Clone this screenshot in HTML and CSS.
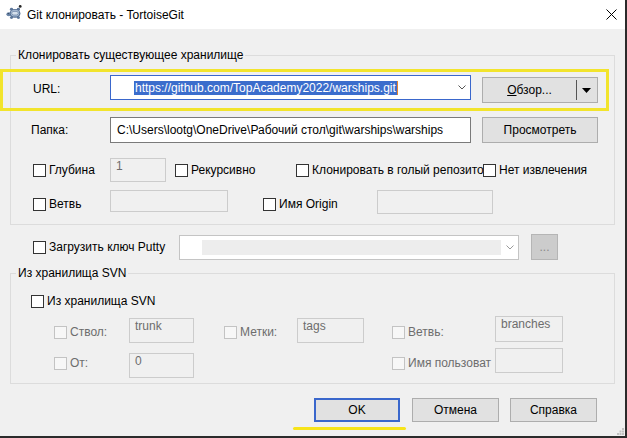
FILE: index.html
```html
<!DOCTYPE html>
<html lang="ru">
<head>
<meta charset="utf-8">
<title>Git клонировать - TortoiseGit</title>
<link rel="stylesheet" href="styles.css">
</head>
<body>
<div class="window">
  <div class="titlebar">
    <svg class="app-icon" viewBox="0 0 16 16" width="16" height="16">
      <ellipse cx="2.8" cy="10.2" rx="2.4" ry="2" fill="#6b86a8"/>
      <circle cx="2.2" cy="9.6" r="0.6" fill="#1f2d40"/>
      <ellipse cx="5.5" cy="13.6" rx="1.6" ry="1.4" fill="#5d779a"/>
      <ellipse cx="12.4" cy="13.6" rx="1.6" ry="1.4" fill="#5d779a"/>
      <ellipse cx="5.5" cy="5.2" rx="1.6" ry="1.4" fill="#5d779a"/>
      <ellipse cx="12.4" cy="5.2" rx="1.6" ry="1.4" fill="#5d779a"/>
      <ellipse cx="9" cy="9.4" rx="5.4" ry="4.4" fill="#4f6a8f"/>
      <ellipse cx="9" cy="9.2" rx="4.3" ry="3.4" fill="#a8bbd3"/>
      <path d="M6.8 7.4h4.4l1.2 1.8-1.2 1.8H6.8L5.6 9.2Z" fill="#d5e0ec" stroke="#5d779a" stroke-width="0.6"/>
      <circle cx="14.2" cy="2.4" r="1.4" fill="#262626"/>
    </svg>
    <span class="title">Git клонировать - TortoiseGit</span>
    <svg class="close" viewBox="0 0 11 11" width="11" height="11">
      <path d="M0.5 0.5L10.5 10.5M10.5 0.5L0.5 10.5" stroke="#000" stroke-width="1"/>
    </svg>
  </div>

  <div class="content">
    <fieldset class="group group-clone">
      <legend>Клонировать существующее хранилище</legend>

      <div class="row row-url">
        <span class="lbl">URL:</span>
        <div class="combo combo-url">
          <span class="sel">https://github.com/TopAcademy2022/warships.git</span><span class="caret"></span>
          <svg class="chev" viewBox="0 0 8 5" width="8" height="5"><path d="M0.5 0.5L4 4L7.5 0.5" fill="none" stroke="#555" stroke-width="1"/></svg>
        </div>
        <div class="btn btn-side btn-split">
          <span class="split-main"><u>О</u>бзор...</span>
          <span class="split-sep"></span>
          <svg class="split-arrow" viewBox="0 0 9 5" width="9" height="5"><path d="M0 0H9L4.5 5Z" fill="#000"/></svg>
        </div>
      </div>

      <div class="row row-path">
        <span class="lbl lbl-path">Папка:</span>
        <div class="edit edit-path">C:\Users\lootg\OneDrive\Рабочий стол\git\warships\warships</div>
        <div class="btn btn-side">Просмотреть</div>
      </div>

      <div class="row row-opts1">
        <label class="cb cb-col1"><span class="box"></span><span class="cb-text">Глубина</span></label>
        <div class="edit disabled edit-depth">1</div>
        <label class="cb cb-recursive"><span class="box"></span><span class="cb-text">Рекурсивно</span></label>
        <label class="cb cb-bare"><span class="box"></span><span class="cb-text">Клонировать в голый репозито</span></label>
        <label class="cb"><span class="box"></span><span class="cb-text">Нет извлечения</span></label>
      </div>

      <div class="row row-opts2">
        <label class="cb cb-col1 cb-low"><span class="box"></span><span class="cb-text">Ветвь</span></label>
        <div class="edit disabled edit-branch"></div>
        <label class="cb cb-origin cb-low"><span class="box"></span><span class="cb-text">Имя Origin</span></label>
        <div class="edit disabled edit-origin"></div>
      </div>
    </fieldset>

    <div class="row row-putty">
      <label class="cb cb-putty"><span class="box"></span><span class="cb-text">Загрузить ключ Putty</span></label>
      <div class="combo combo-putty">
        <span class="combo-fill"></span>
        <svg class="chev" viewBox="0 0 8 5" width="8" height="5"><path d="M0.5 0.5L4 4L7.5 0.5" fill="none" stroke="#9a9a9a" stroke-width="1"/></svg>
      </div>
      <div class="btn btn-dots">...</div>
    </div>

    <fieldset class="group group-svn">
      <legend>Из хранилища SVN</legend>

      <div class="row row-svn">
        <label class="cb"><span class="box"></span><span class="cb-text">Из хранилища SVN</span></label>
      </div>

      <div class="row row-trunk">
        <label class="cb disabled cb-svn1"><span class="box"></span><span class="cb-text">Ствол:</span></label>
        <div class="edit disabled svn-edit edit-trunk">trunk</div>
        <label class="cb disabled cb-tags"><span class="box"></span><span class="cb-text">Метки:</span></label>
        <div class="edit disabled svn-edit edit-tags">tags</div>
        <label class="cb disabled cb-branches"><span class="box"></span><span class="cb-text">Ветвь:</span></label>
        <div class="edit disabled svn-edit edit-branches">branches</div>
      </div>

      <div class="row row-rev">
        <label class="cb disabled cb-svn1"><span class="box"></span><span class="cb-text">От:</span></label>
        <div class="edit disabled svn-edit edit-rev">0</div>
        <label class="cb disabled cb-user"><span class="box"></span><span class="cb-text">Имя пользоват</span></label>
        <div class="edit disabled svn-edit edit-user"></div>
      </div>
    </fieldset>

    <div class="row row-buttons">
      <div class="btn btn-dlg btn-default">OK</div>
      <div class="btn btn-dlg btn-cancel">Отмена</div>
      <div class="btn btn-dlg btn-help">Справка</div>
    </div>
  </div>

  <div class="mark mark-url"></div>
  <div class="mark mark-ok"></div>
  <svg class="grip" viewBox="0 0 7 7" width="7" height="7">
    <rect x="5" y="0" width="2" height="2" fill="#c2c2c2"/>
    <rect x="2.5" y="2.5" width="2" height="2" fill="#c2c2c2"/>
    <rect x="5" y="2.5" width="2" height="2" fill="#c2c2c2"/>
    <rect x="0" y="5" width="2" height="2" fill="#c2c2c2"/>
    <rect x="2.5" y="5" width="2" height="2" fill="#c2c2c2"/>
    <rect x="5" y="5" width="2" height="2" fill="#c2c2c2"/>
  </svg>
</div>
</body>
</html>
```

FILE: styles.css
```css
* { box-sizing: border-box; }
html, body { margin: 0; padding: 0; }
body {
  width: 627px;
  height: 438px;
  overflow: hidden;
  background: #2b2b2b;
  font-family: "Liberation Sans", Arial, sans-serif;
  font-size: 12px;
  color: #000;
}
.window {
  position: relative;
  width: 625px;
  height: 436px;
  background: #f0f0f0;
  overflow: hidden;
}

/* title bar */
.titlebar {
  height: 29px;
  background: #fff;
  display: flex;
  align-items: center;
}
.app-icon { flex: none; margin-left: 6px; align-self: flex-start; margin-top: 4px; }
.title { margin-left: 5px; line-height: 16px; }
.close { flex: none; margin-left: auto; margin-right: 8px; margin-top: -1px; }

/* content */
.content { padding: 18px 0 0 10px; }

.group {
  margin: 0;
  padding: 0;
  width: 605px;
  min-width: 0;
  border: 1px solid #dcdcdc;
}
.group legend {
  margin-left: 5px;
  padding: 0 2px;
  line-height: 16px;
}
.group-clone { padding-bottom: 10px; }
.group-svn { margin-top: 5px; padding-bottom: 5px; }

.row { display: flex; align-items: center; }

.lbl { flex: none; width: 77px; line-height: 16px; }
.lbl-path { text-indent: -2px; }

.row-url { margin-top: 12px; height: 28px; padding-left: 22px; align-items: flex-start; }
.row-url .lbl { align-self: center; }
.row-path { margin-top: 14px; height: 26px; padding-left: 22px; }
.row-opts1 { margin-top: 15px; height: 24px; padding-left: 22px; }
.row-opts2 { margin-top: 8px; height: 24px; padding-left: 22px; align-items: flex-start; }
.row-putty { margin-top: 9px; height: 26px; padding-left: 23px; }
.row-svn { margin-top: 12px; height: 16px; padding-left: 20px; }
.row-trunk { margin-top: 7px; height: 27px; padding-left: 43px; align-items: flex-start; }
.row-rev { margin-top: 5px; height: 30px; padding-left: 43px; align-items: flex-start; }
.row-buttons { margin-top: 14px; height: 24px; justify-content: flex-end; padding-right: 28px; }

/* checkbox */
.cb { flex: none; display: flex; align-items: center; white-space: nowrap; }
.box { flex: none; width: 13px; height: 13px; border: 1px solid #333; background: #fff; position: relative; }
.cb-text { margin-left: 3px; line-height: 16px; }
.cb.disabled { color: #6d6d6d; }
.cb.disabled .box { border-color: #c3c3c3; background: #f7f7f7; }

.cb-col1 { width: 77px; }
.cb-recursive { width: 121px; margin-left: 9px; }
.cb-bare { width: 187px; }
.cb-low { height: 24px; padding-top: 4px; }
.cb-origin { width: 114px; margin-left: 35px; }
.cb-putty { width: 146px; }
.cb-svn1 { width: 75px; height: 27px; padding-top: 5px; }
.row-rev .cb-svn1 { height: 30px; padding-top: 0; }
.cb-tags { width: 73px; margin-left: 30px; height: 27px; padding-top: 5px; }
.cb-branches { width: 103px; margin-left: 28px; height: 27px; padding-top: 5px; }
.cb-user { width: 103px; margin-left: 198px; height: 30px; }

/* edits */
.edit {
  flex: none;
  background: #fff;
  border: 1px solid #7a7a7a;
  white-space: nowrap;
  overflow: hidden;
  padding: 0 6px;
  line-height: 16px;
}
.edit.disabled {
  background: #f0f0f0;
  border-color: #cccccc;
  color: #6d6d6d;
  padding: 0 5px;
  line-height: 14px;
}
.edit-path { width: 361px; height: 26px; padding-top: 4px; }
.edit-depth { width: 56px; height: 24px; padding-top: 1px; }
.edit-branch { width: 118px; height: 22px; }
.edit-origin { width: 116px; height: 24px; margin-left: 0; }
.svn-edit { padding-top: 3px; }
.edit-trunk { width: 65px; height: 25px; margin-top: 2px; }
.edit-tags { width: 67px; height: 25px; margin-top: 2px; }
.edit-branches { width: 68px; height: 26px; }
.edit-rev { width: 65px; height: 25px; margin-top: 5px; }
.edit-user { width: 68px; height: 25px; }

/* combos */
.combo {
  flex: none;
  display: flex;
  align-items: center;
  background: #fff;
}
.combo-url { width: 361px; height: 25px; border: 1px solid #3a67cc; }
.sel {
  margin-left: 23px;
  padding: 0 1px;
  background: #3b6dcc;
  color: #fff;
  line-height: 14px;
  white-space: nowrap;
}
.caret { width: 1px; height: 14px; background: #e8852a; }
.chev { flex: none; margin-left: auto; margin-right: 4px; }
.combo-putty { width: 340px; height: 25px; border: 1px solid #c4c4c4; }
.combo-fill { width: 299px; height: 15px; margin-left: 22px; background: #ededed; }

/* buttons */
.btn {
  flex: none;
  display: flex;
  align-items: center;
  justify-content: center;
  background: #e1e1e1;
  border: 1px solid #adadad;
  line-height: 16px;
  white-space: nowrap;
}
.btn-side { width: 116px; height: 26px; margin-left: 11px; }
.row-url .btn-side { margin-top: 2px; }
.btn-split { justify-content: flex-start; }
.split-main { width: 93px; text-align: center; }
.split-sep { width: 1px; height: 20px; background: #555; }
.split-arrow { margin-left: 5px; }
.btn-dots { width: 27px; height: 26px; margin-left: 12px; background: #cccccc; border-color: #b5b5b5; color: #8a8a8a; }
.btn-dlg { width: 87px; height: 24px; }
.btn-default { width: 86px; border: 2px solid #3a67cc; }
.btn-cancel { margin-left: 12px; }
.btn-help { margin-left: 11px; }

/* annotations drawn over the screenshot */
.mark { position: absolute; }
.mark-url { left: 0; top: 69px; width: 609px; height: 42px; border: 3px solid #f2e42c; }
.mark-ok { left: 293px; top: 427px; width: 113px; height: 3px; background: #f7e41a; border-radius: 2px; }
.grip { position: absolute; right: 1px; bottom: 1px; }
```
